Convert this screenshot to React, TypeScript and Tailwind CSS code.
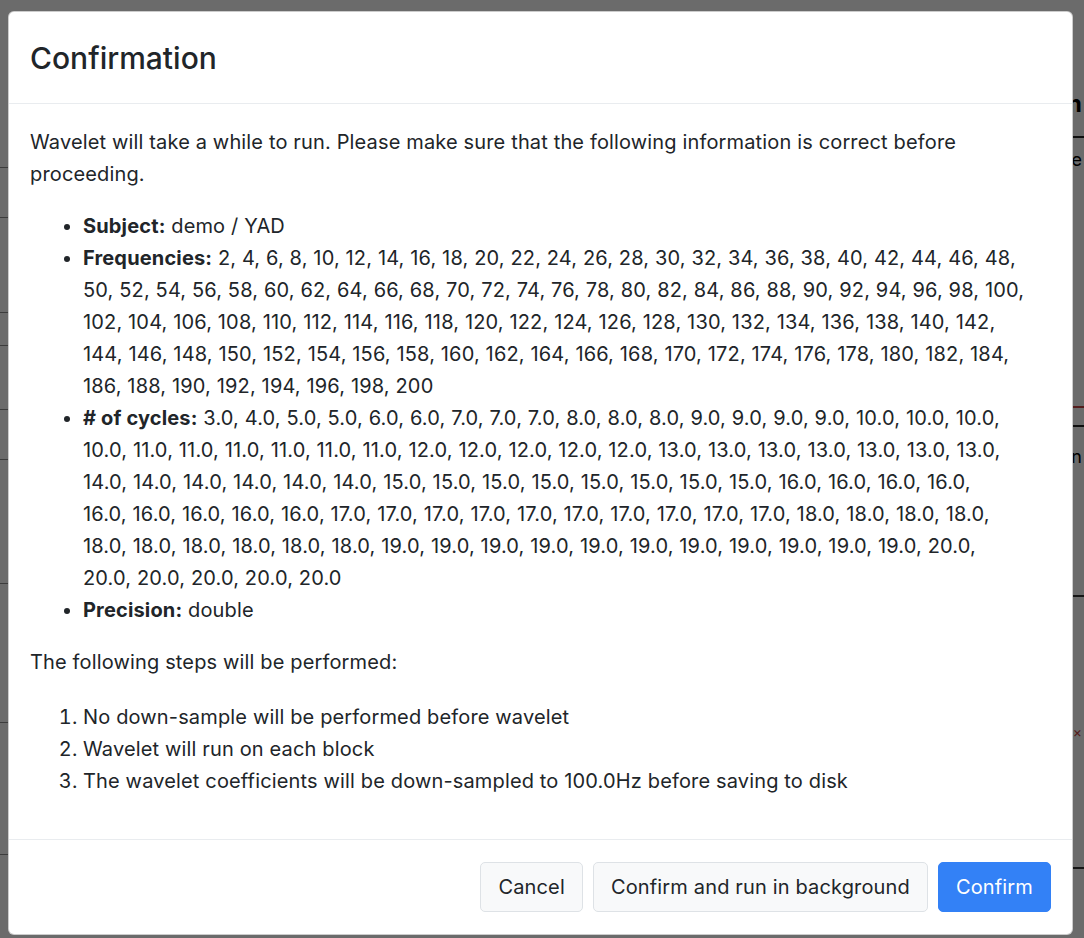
import React from "react";

const freqLines = [
  "2, 4, 6, 8, 10, 12, 14, 16, 18, 20, 22, 24, 26, 28, 30, 32, 34, 36, 38, 40, 42, 44, 46, 48,",
  "50, 52, 54, 56, 58, 60, 62, 64, 66, 68, 70, 72, 74, 76, 78, 80, 82, 84, 86, 88, 90, 92, 94, 96, 98, 100,",
  "102, 104, 106, 108, 110, 112, 114, 116, 118, 120, 122, 124, 126, 128, 130, 132, 134, 136, 138, 140, 142,",
  "144, 146, 148, 150, 152, 154, 156, 158, 160, 162, 164, 166, 168, 170, 172, 174, 176, 178, 180, 182, 184,",
  "186, 188, 190, 192, 194, 196, 198, 200",
];

const cycleLines = [
  "3.0, 4.0, 5.0, 5.0, 6.0, 6.0, 7.0, 7.0, 7.0, 8.0, 8.0, 8.0, 9.0, 9.0, 9.0, 9.0, 10.0, 10.0, 10.0,",
  "10.0, 11.0, 11.0, 11.0, 11.0, 11.0, 11.0, 12.0, 12.0, 12.0, 12.0, 12.0, 13.0, 13.0, 13.0, 13.0, 13.0, 13.0, 13.0,",
  "14.0, 14.0, 14.0, 14.0, 14.0, 14.0, 15.0, 15.0, 15.0, 15.0, 15.0, 15.0, 15.0, 15.0, 16.0, 16.0, 16.0, 16.0,",
  "16.0, 16.0, 16.0, 16.0, 16.0, 17.0, 17.0, 17.0, 17.0, 17.0, 17.0, 17.0, 17.0, 17.0, 17.0, 18.0, 18.0, 18.0, 18.0,",
  "18.0, 18.0, 18.0, 18.0, 18.0, 18.0, 19.0, 19.0, 19.0, 19.0, 19.0, 19.0, 19.0, 19.0, 19.0, 19.0, 19.0, 20.0,",
  "20.0, 20.0, 20.0, 20.0, 20.0",
];

const steps = [
  "No down-sample will be performed before wavelet",
  "Wavelet will run on each block",
  "The wavelet coefficients will be down-sampled to 100.0Hz before saving to disk",
];

// keeps the reference's line breaks regardless of font metrics
const Lines = ({ lines }: { lines: string[] }) => (
  <>
    {lines.map((l, i) => (
      <React.Fragment key={i}>
        {i > 0 && <br />}
        <span className="whitespace-nowrap">{l}</span>
      </React.Fragment>
    ))}
  </>
);

const BackgroundPage = () => (
  <div className="h-[938px] w-full bg-[#f4f4f4] flex overflow-hidden">
    {/* left column of the page behind */}
    <div className="w-[540px] flex flex-col">
      <div className="h-[168px] border-b border-[#888]" />
      <div className="h-[50px] border-b border-[#888]" />
      <div className="h-[95px] border-b border-[#888]" />
      <div className="h-[33px] border-b border-[#888]" />
      <div className="h-[64px] border-b border-[#888]" />
      <div className="h-[50px] border-b border-[#888]" />
      <div className="h-[124px] border-b border-[#888]" />
      <div className="h-[139px] border-b border-[#888]" />
      <div className="h-[132px] border-b border-[#888]" />
    </div>
    {/* right column of the page behind */}
    <div className="flex-1 flex flex-col">
      <div className="h-[138px] w-full border-b-2 border-[#222] flex items-end justify-end pb-[20px] pr-[2px]">
        <span className="text-[24px] leading-none font-bold text-black">m</span>
      </div>
      <div className="h-[44px] w-full flex items-center justify-end pr-[2px]">
        <span className="text-[18px] leading-none text-black">e</span>
      </div>
      <div className="h-[226px] w-full border-b-2 border-[#c04040]" />
      <div className="h-[19px] w-full border-b-2 border-[#222]" />
      <div className="h-[60px] w-full flex items-center justify-end pr-[2px]">
        <span className="text-[18px] leading-none text-black">n</span>
      </div>
      <div className="h-[110px] w-full border-b-2 border-[#333]" />
      <div className="h-[270px] w-full flex items-center justify-end pr-[2px]">
        <span className="text-[14px] leading-none text-[#c04040]">×</span>
      </div>
      <div className="h-[66px] w-full border-t-2 border-[#333]" />
    </div>
  </div>
);

const App = () => {
  return (
    <div className="relative h-[938px] w-full overflow-hidden font-['Inter',sans-serif] text-[#212529]">
      <BackgroundPage />
      <div className="absolute inset-0 bg-black/[0.56] pt-[11px] pl-[8px]">
        <div className="w-[1065px] bg-white border border-black/20 rounded-[6px] flex flex-col">
          <div className="h-[92px] px-[21px] flex items-center border-b border-[#e9ecef]">
            <h4 className="text-[30px] font-medium leading-[36px]">Confirmation</h4>
          </div>

          <div className="px-[21px] py-[22px] text-[20px] leading-[32px] tracking-[0.15px]">
            <p className="mb-[20px]">
              Wavelet will take a while to run. Please make sure that the following information is correct before
              <br />
              proceeding.
            </p>
            <ul className="list-disc pl-[53px] mb-[20px]">
              <li>
                <b>Subject:</b> demo / YAD
              </li>
              <li>
                <b>Frequencies:</b> <Lines lines={freqLines} />
              </li>
              <li>
                <b># of cycles:</b> <Lines lines={cycleLines} />
              </li>
              <li>
                <b>Precision:</b> double
              </li>
            </ul>
            <p className="mb-[23px]">The following steps will be performed:</p>
            <ol className="list-decimal pl-[53px] mb-[20px]">
              {steps.map((s) => (
                <li key={s}>{s}</li>
              ))}
            </ol>
          </div>

          <div className="px-[21px] py-[22px] flex justify-end gap-[10px] border-t border-[#e9ecef]">
            <button className="h-[50px] px-[17px] text-[20px] tracking-[0.15px] rounded-[5px] bg-[#f8f9fa] border border-[#dee2e6] text-[#212529]">
              Cancel
            </button>
            <button className="h-[50px] px-[17px] text-[20px] tracking-[0.15px] rounded-[5px] bg-[#f8f9fa] border border-[#dee2e6] text-[#212529]">
              Confirm and run in background
            </button>
            <button className="h-[50px] px-[17px] text-[20px] tracking-[0.15px] rounded-[5px] bg-[#3381f6] border border-[#3381f6] text-white">
              Confirm
            </button>
          </div>
        </div>
      </div>
    </div>
  );
};

export default App;
